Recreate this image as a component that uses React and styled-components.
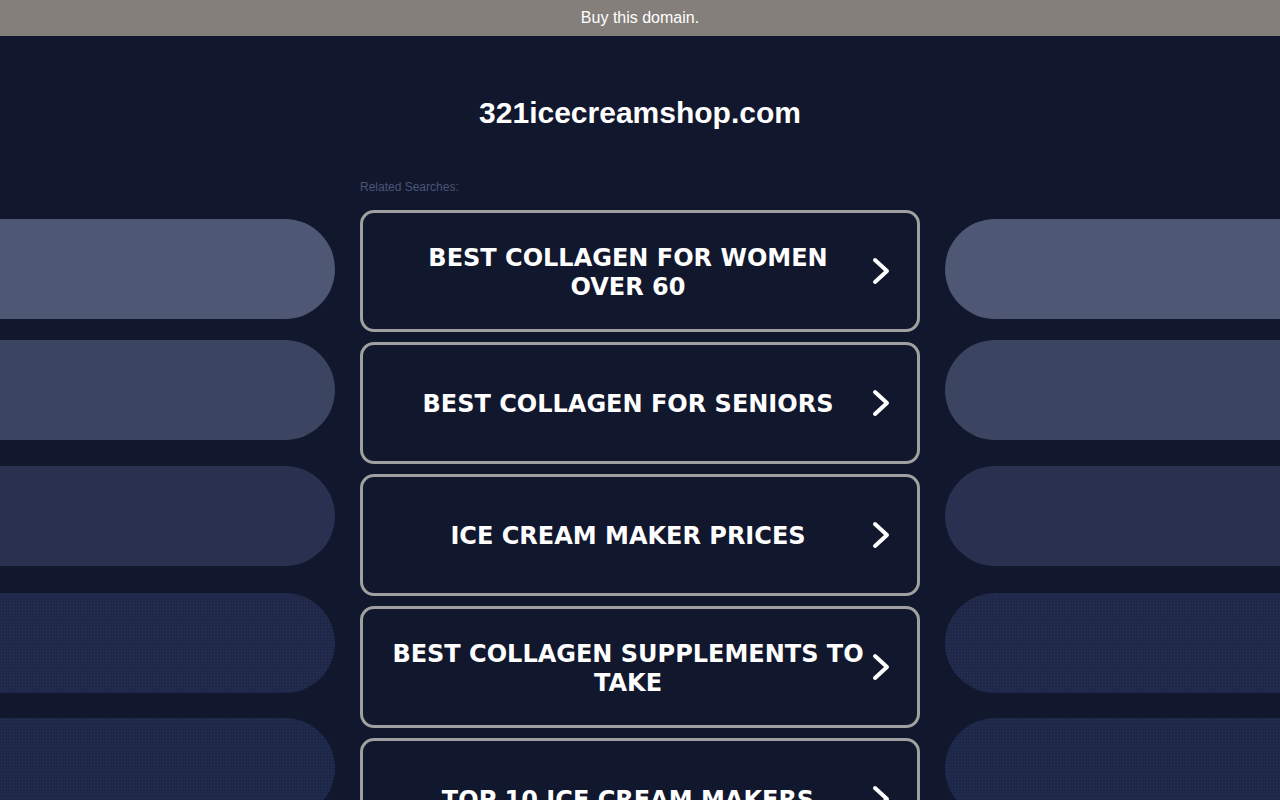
import React from 'react';
import styled, { createGlobalStyle } from 'styled-components';

const GlobalStyle = createGlobalStyle`
  html, body {
    margin: 0;
    padding: 0;
    background: #11172d;
    overflow: hidden;
  }
  body {
    font-family: "Liberation Sans", Arial, sans-serif;
  }
`;

const Page = styled.div`
  min-height: 800px;
  background: #11172d;
`;

const TopBar = styled.div`
  height: 36px;
  background: #857f7b;
  color: #ffffff;
  font-size: 16px;
  display: flex;
  align-items: center;
  justify-content: center;
  padding-bottom: 1px;
  box-sizing: border-box;
`;

const Title = styled.h1`
  margin: 0;
  padding-top: 58px;
  height: 144px;
  box-sizing: border-box;
  text-align: center;
  color: #ffffff;
  font-size: 30px;
  line-height: 37px;
  font-weight: bold;
`;

const Body = styled.div`
  display: grid;
  grid-template-columns: 360px 560px 360px;
`;

const Side = styled.div`
  display: flex;
  flex-direction: column;
  padding-top: 39px;
  overflow: hidden;
`;

const Pill = styled.div`
  width: 335px;
  height: 100px;
  flex-shrink: 0;
  margin-top: ${(p) => p.top}px;
  background-color: ${(p) => p.color};
  background-image: ${(p) =>
    p.dotted ? 'radial-gradient(rgba(60, 75, 120, 0.35) 0.6px, transparent 0.8px)' : 'none'};
  background-size: 3px 3px;
  border-radius: ${(p) => (p.right ? '50px 0 0 50px' : '0 50px 50px 0')};
  align-self: ${(p) => (p.right ? 'flex-end' : 'flex-start')};
`;

const Center = styled.div`
  display: flex;
  flex-direction: column;
`;

const Related = styled.div`
  font-size: 12px;
  line-height: 14px;
  color: #4b5577;
  height: 30px;
`;

const List = styled.div`
  display: flex;
  flex-direction: column;
  gap: 10px;
`;

const LinkButton = styled.a`
  display: flex;
  align-items: center;
  height: 122px;
  flex-shrink: 0;
  box-sizing: border-box;
  border: 3px solid #a0a0a0;
  border-radius: 14px;
  padding: 3px 26px 0 28px;
  color: #ffffff;
  text-decoration: none;
  cursor: pointer;
`;

const LinkText = styled.span`
  flex: 1;
  text-align: center;
  font-family: "DejaVu Sans", Verdana, sans-serif;
  font-weight: bold;
  font-size: 24px;
  line-height: 29px;
  text-transform: uppercase;
`;

const Chevron = styled.svg`
  width: 22px;
  height: 30px;
  margin: 0 0 4px 4px;
  flex-shrink: 0;
`;

const links = [
  'Best Collagen For Women Over 60',
  'Best Collagen For Seniors',
  'Ice Cream Maker Prices',
  'Best Collagen Supplements To Take',
  'Top 10 Ice Cream Makers',
];

const pills = [
  { color: '#4e5774', top: 0 },
  { color: '#3b4461', top: 21 },
  { color: '#2a3150', top: 26 },
  { color: '#1f2848', top: 27, dotted: true },
  { color: '#1d2747', top: 25, dotted: true },
];

const Arrow = () => (
  <Chevron viewBox="0 0 22 30">
    <polyline
      points="6,4 18,15 6,26"
      fill="none"
      stroke="#ffffff"
      strokeWidth="4"
      strokeLinecap="round"
      strokeLinejoin="round"
    />
  </Chevron>
);

const App = () => (
  <Page>
    <GlobalStyle />
    <TopBar>Buy this domain.</TopBar>
    <Title>321icecreamshop.com</Title>
    <Body>
      <Side>
        {pills.map((p, i) => (
          <Pill key={i} color={p.color} top={p.top} dotted={p.dotted} />
        ))}
      </Side>
      <Center>
        <Related>Related Searches:</Related>
        <List>
          {links.map((text) => (
            <LinkButton key={text}>
              <LinkText>{text}</LinkText>
              <Arrow />
            </LinkButton>
          ))}
        </List>
      </Center>
      <Side>
        {pills.map((p, i) => (
          <Pill key={i} right color={p.color} top={p.top} dotted={p.dotted} />
        ))}
      </Side>
    </Body>
  </Page>
);

export default App;
